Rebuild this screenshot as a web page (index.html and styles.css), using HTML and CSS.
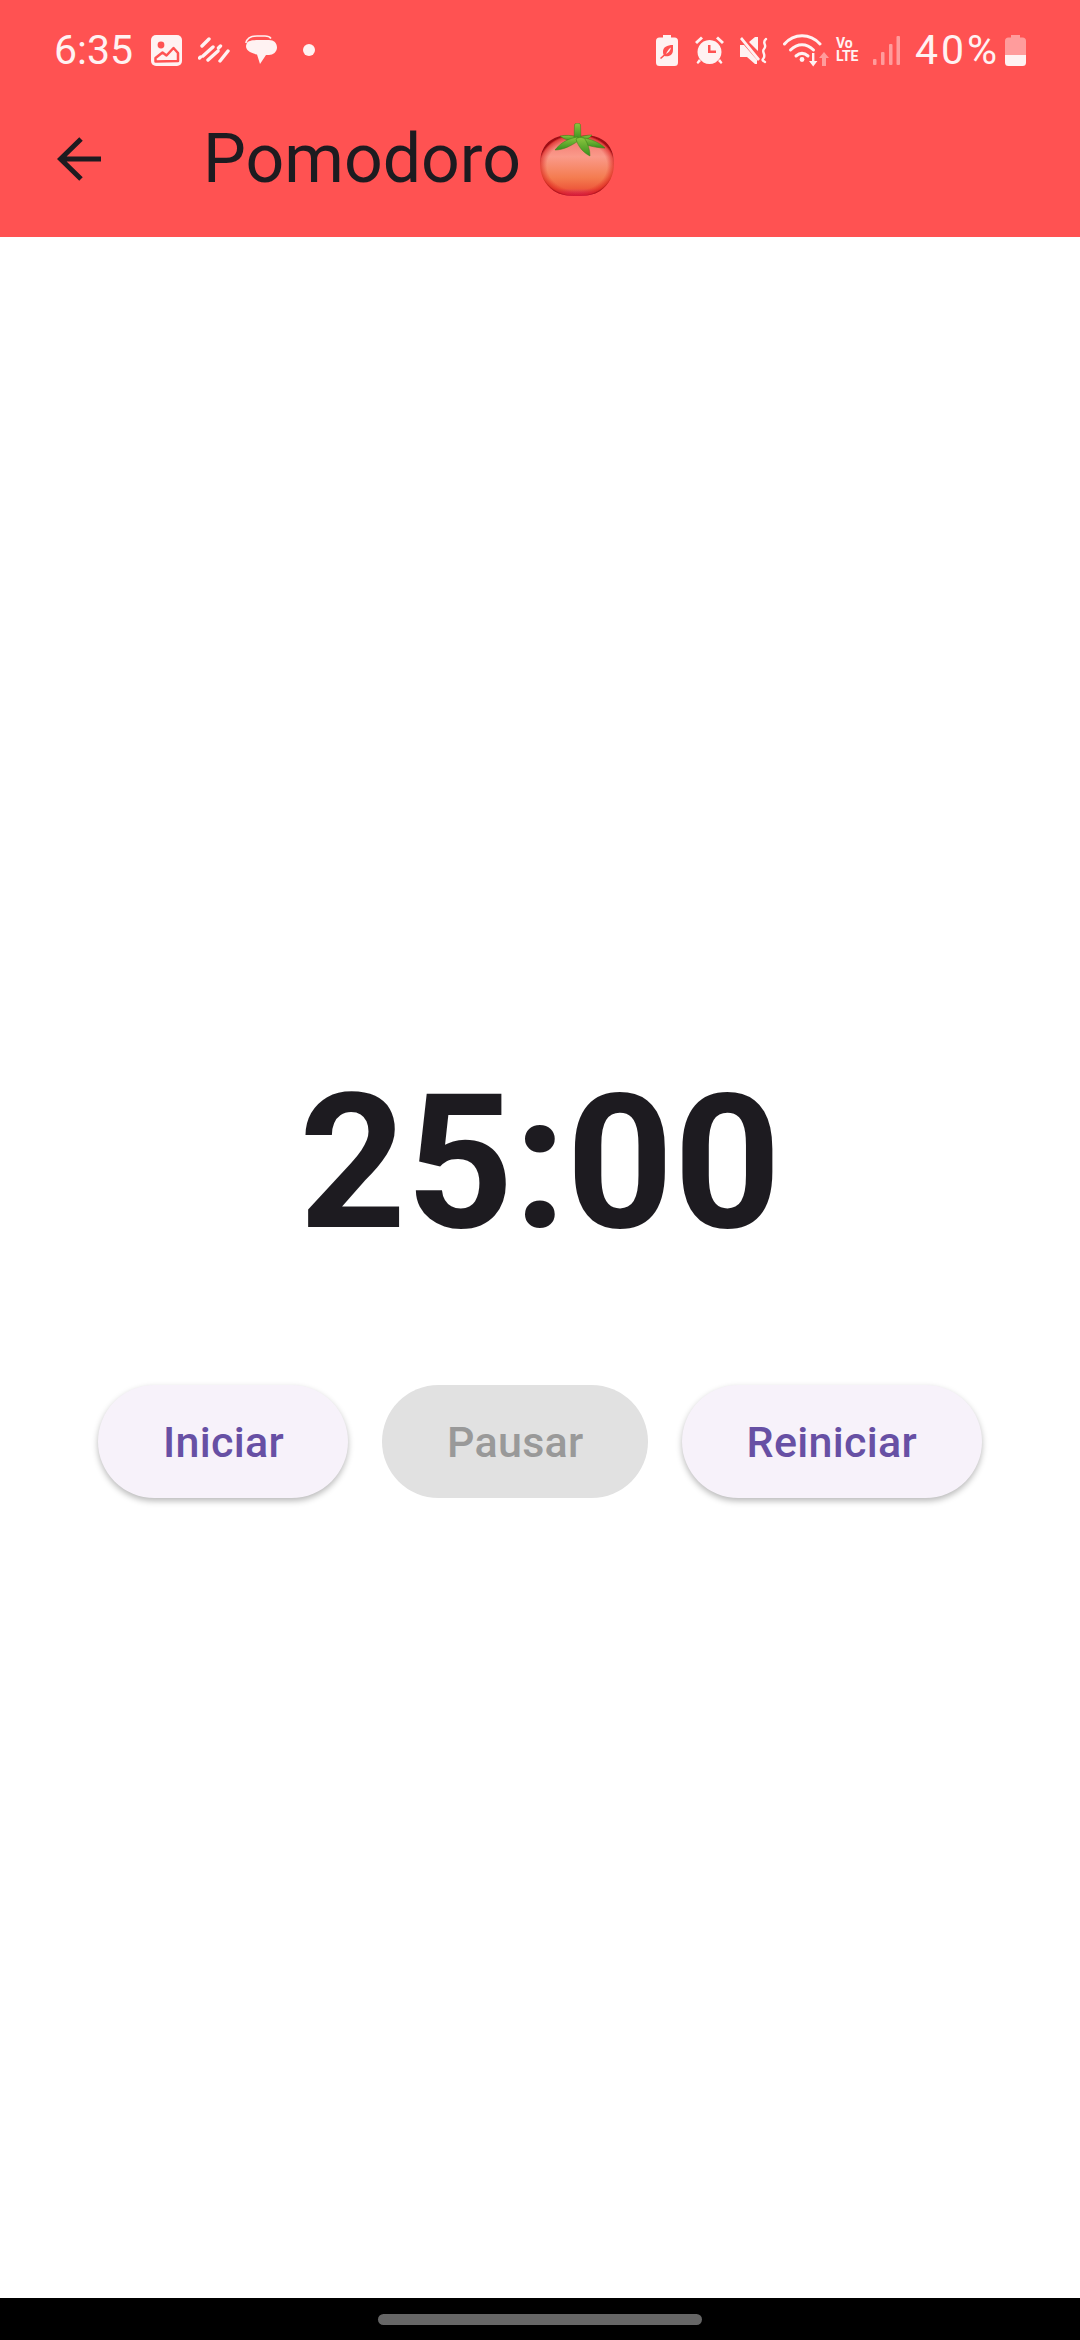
FILE: index.html
```html
<!DOCTYPE html>
<html lang="en">
<head>
    <meta charset="UTF-8">
    <meta name="viewport" content="width=device-width, initial-scale=1.0">
    <title>Pomodoro</title>
    <link rel="stylesheet" href="styles.css">
</head>
<body>
    <header class="top">
        <div class="status">
            <div class="status-left">
                <span class="clock">6:35</span>
                <svg class="ic ic-image" viewBox="0 0 31 31"><rect width="31" height="31" rx="5" fill="#fff2f2"/><circle cx="10" cy="10" r="3.400" fill="#ff5252"/><path d="M4.500 26.500V23l7-5.500 4 3 7-7.500 4.500 5v8z" fill="#fff2f2" stroke="#ff5252" stroke-width="2.500" stroke-linejoin="round"/></svg>
                <svg class="ic ic-stripes" viewBox="0 0 32 26" stroke="#fff2f2" stroke-width="3.400" stroke-linecap="round" fill="none"><path d="M4 9l7-7M1.500 21l1-1M5 19l10-9M10 23l10-9M20.500 11l2-2M22 24l8-10"/></svg>
                <svg class="ic ic-chat" viewBox="0 0 32 30"><path fill="#fff2f2" d="M14 5h10c5 0 8 3 8 7.500S28 20 24 20h-3l-6 9-3-9.500C5 18 1 15 1 11c0-1 .5-2 1-3 1-2 6-3 12-3z"/><path fill="none" stroke="#fff2f2" stroke-width="1.500" d="M.8 8C2 3 7 1 12 1h8c3 0 5 1 6 2.500"/></svg>
                <span class="dot"></span>
            </div>
            <div class="status-right">
                <svg class="ic ic-leaf" viewBox="0 0 22 31"><path fill-rule="evenodd" fill="#fff2f2" d="M7 0h8v2.500h3.500A3.500 3.500 0 0 1 22 6v21.500a3.500 3.500 0 0 1-3.500 3.500h-15A3.500 3.500 0 0 1 0 27.500V6a3.500 3.500 0 0 1 3.500-3.500H7zM17 10c-6 0-10 2-10 7 0 1 .2 2 .6 2.800L4 23l1 1 3.500-3c3 1 8.500 0 8.500-6zM15 12.500c-.5 3.500-3 5.500-5 6.500 1-2.500 2.500-5 5-6.500z"/></svg>
                <svg class="ic ic-alarm" viewBox="0 0 29 28"><path fill-rule="evenodd" fill="#fff2f2" d="M14.500 4a12 12 0 1 1-.01 0zM13 9v8h8v-2.500h-5.500V9z"/><path fill="#fff2f2" d="M0 6 6 .5l2 2-6 5.500zM29 6 23 .5l-2 2 6 5.500zM4 23l2 2-3 3-1.500-1.500zM25 23l-2 2 3 3 1.500-1.500z"/></svg>
                <svg class="ic ic-mute" viewBox="0 0 30 27"><path fill="#fff2f2" d="M2 0 20 22l-2 2L0 2zM0 8h4l13 15v4h-2l-8-7H0zM9 5l6-5h3v14z"/><path fill="none" stroke="#fff2f2" stroke-width="2.400" stroke-linecap="round" d="M26 2c-5 4 2 6-2 10-3 3 3 6-1 10-1 1 0 2 2 3"/></svg>
                <svg class="ic ic-wifi" viewBox="0 0 47 33"><g fill="none" stroke="#fff2f2" stroke-width="3" stroke-linecap="round"><path d="M1.500 10C11-1 27-1 37 10"/><path d="M7.500 16c7-7 16-7 23 0"/><path d="M13 22c4-3.500 8-3.500 12 0"/></g><circle cx="19" cy="25.500" r="2.400" fill="#fff2f2"/><path fill="#fff2f2" d="M29 19h2.400v8h3l-4.200 5.500L26 27h3z"/><path fill="#ff9c9c" d="M41 18l5 6h-3v8h-4v-8h-3z"/></svg>
                <div class="volte"><span>Vo</span><span>LTE</span></div>
                <svg class="ic ic-signal" viewBox="0 0 27 29" fill="#ff9c9c"><rect x="0" y="23" width="3.500" height="6" rx="1"/><rect x="8" y="16" width="3.500" height="13" rx="1"/><rect x="16" y="8" width="3.500" height="21" rx="1"/><rect x="23.500" y="0" width="3.500" height="29" rx="1"/></svg>
                <span class="level">40%</span>
                <svg class="ic ic-battery" viewBox="0 0 21 31"><path fill="#ff9c9c" d="M6 0h9v2.500h2.500A3.500 3.500 0 0 1 21 6v14H0V6a3.500 3.500 0 0 1 3.500-3.500H6z"/><path fill="#fff2f2" d="M0 20h21v7.500a3.500 3.500 0 0 1-3.500 3.500h-14A3.500 3.500 0 0 1 0 27.500z"/></svg>
            </div>
        </div>
        <div class="toolbar">
            <svg class="back" viewBox="0 0 44 44" fill="none" stroke="#1d1b20" stroke-width="5"><path d="M44 22H4M24 2 3.500 22 24 42"/></svg>
            <h1 class="title">Pomodoro</h1>
            <svg class="tomato" viewBox="0 0 74 73">
                <defs>
                    <linearGradient id="skin" x1="0" y1="0" x2="0" y2="1">
                        <stop offset="0" stop-color="#f2726c"/>
                        <stop offset="0.35" stop-color="#fa9a8a"/>
                        <stop offset="0.7" stop-color="#f47c50"/>
                        <stop offset="0.88" stop-color="#ee5a3c"/>
                        <stop offset="1" stop-color="#d01a60"/>
                    </linearGradient>
                    <radialGradient id="rim" cx="50%" cy="50%" r="52%">
                        <stop offset="0.78" stop-color="#e02020" stop-opacity="0"/>
                        <stop offset="0.95" stop-color="#d81a1a" stop-opacity="0.6"/>
                        <stop offset="1" stop-color="#a00c14"/>
                    </radialGradient>
                    <linearGradient id="leaf" x1="0" y1="0" x2="0" y2="1">
                        <stop offset="0" stop-color="#8cc63f"/>
                        <stop offset="1" stop-color="#37901e"/>
                    </linearGradient>
                </defs>
                <path fill="url(#skin)" d="M37 13c9-1.500 19-.5 26 4 8 5 11 14 11 24 0 11-5 21-14 27-6 4-14 5-23 5s-17-1-23-5C5 62 0 52 0 41c0-10 3-19 11-24 7-4.500 17-5.500 26-4z"/>
                <path fill="url(#rim)" d="M37 13c9-1.500 19-.5 26 4 8 5 11 14 11 24 0 11-5 21-14 27-6 4-14 5-23 5s-17-1-23-5C5 62 0 52 0 41c0-10 3-19 11-24 7-4.500 17-5.500 26-4z"/>
                <g fill="url(#leaf)" stroke="#3a7d18" stroke-width=".5">
                    <path d="M20 13c6-1 11-1 17 1l-1 4c-6 0-11-1-16-5z"/>
                    <path d="M52 12c-5 0-10 1-15 3l2 3c5 0 10-2 13-6z"/>
                    <path d="M34.500 2c0-2.500 6-2.500 6 0l.5 15h-7z"/>
                    <path d="M38 14c-9 1-18 6-23 13 8 0 16-4 23-9z"/>
                    <path d="M37 15c9-1 21 3 28 10-9 0-21-3-28-7z"/>
                    <path d="M36 16c2-2 7-2 9 0 3 5 5 11 5 17-6-3-12-9-14-17z"/>
                </g>
            </svg>
        </div>
    </header>

    <main class="content">
        <div class="timer">25:00</div>
        <div class="actions">
            <button class="btn">Iniciar</button>
            <button class="btn btn-off" disabled>Pausar</button>
            <button class="btn">Reiniciar</button>
        </div>
    </main>

    <footer class="navbar">
        <div class="handle"></div>
    </footer>
</body>
</html>
```

FILE: styles.css
```css
body {
    margin: 0;
    height: 2340px;
    display: flex;
    flex-direction: column;
    background: #fff;
    font-family: Roboto, sans-serif;
    color: #1d1b20;
    overflow: hidden;
}
.top {
    background: #ff5252;
    height: 237px;
    flex: none;
}
.status {
    height: 81px;
    box-sizing: border-box;
    padding: 19px 54px 0 54px;
    display: flex;
    align-items: center;
    justify-content: space-between;
    color: #fff2f2;
}
.status-left, .status-right {
    display: flex;
    align-items: center;
}
.clock, .level {
    font-size: 41px;
    line-height: 46px;
}
.level {
    letter-spacing: 3px;
    margin-left: 15px;
}
.ic {
    display: block;
    flex: none;
}
.ic-image { width: 31px; height: 31px; margin-left: 18px; }
.ic-stripes { width: 32px; height: 26px; margin-left: 16px; }
.ic-chat { width: 32px; height: 30px; margin-left: 15px; }
.dot {
    width: 12px;
    height: 12px;
    margin-left: 26px;
    border-radius: 50%;
    background: #fff2f2;
}
.ic-leaf { width: 22px; height: 31px; }
.ic-alarm { width: 29px; height: 28px; margin-left: 17px; }
.ic-mute { width: 30px; height: 27px; margin-left: 16px; }
.ic-wifi { width: 47px; height: 33px; margin-left: 13px; }
.volte {
    display: flex;
    flex-direction: column;
    width: 25px;
    margin-left: 6px;
    font-size: 14px;
    line-height: 13px;
    font-weight: 700;
}
.ic-signal { width: 27px; height: 29px; margin-left: 12px; }
.ic-battery { width: 21px; height: 31px; margin-left: 5px; }

.toolbar {
    height: 156px;
    display: flex;
    align-items: center;
    padding-left: 57px;
}
.back {
    width: 44px;
    height: 44px;
    flex: none;
}
.title {
    margin: 0 0 0 102px;
    font-size: 68px;
    font-weight: 400;
    line-height: 78px;
}
.tomato {
    width: 74px;
    height: 73px;
    margin-left: 19px;
    flex: none;
}

.content {
    flex: 1;
    display: flex;
    flex-direction: column;
    align-items: center;
    padding-top: 818px;
}
.timer {
    font-size: 187px;
    font-weight: 700;
    line-height: 218px;
}
.actions {
    display: flex;
    gap: 34px;
    margin-top: 112px;
}
.btn {
    height: 113px;
    padding: 0 64.5px;
    border: none;
    border-radius: 57px;
    background: #f7f2fa;
    color: #6750a4;
    font-family: Roboto, sans-serif;
    font-size: 43px;
    font-weight: 500;
    letter-spacing: 0.3px;
    box-shadow: 0 3px 6px rgba(0, 0, 0, 0.28);
}
.btn-off {
    background: #e1e1e1;
    color: #999;
    box-shadow: none;
}

.navbar {
    height: 42px;
    flex: none;
    background: #000;
    display: flex;
    justify-content: center;
    padding-top: 16px;
    box-sizing: border-box;
}
.handle {
    width: 324px;
    height: 11px;
    border-radius: 6px;
    background: #666;
}
```
